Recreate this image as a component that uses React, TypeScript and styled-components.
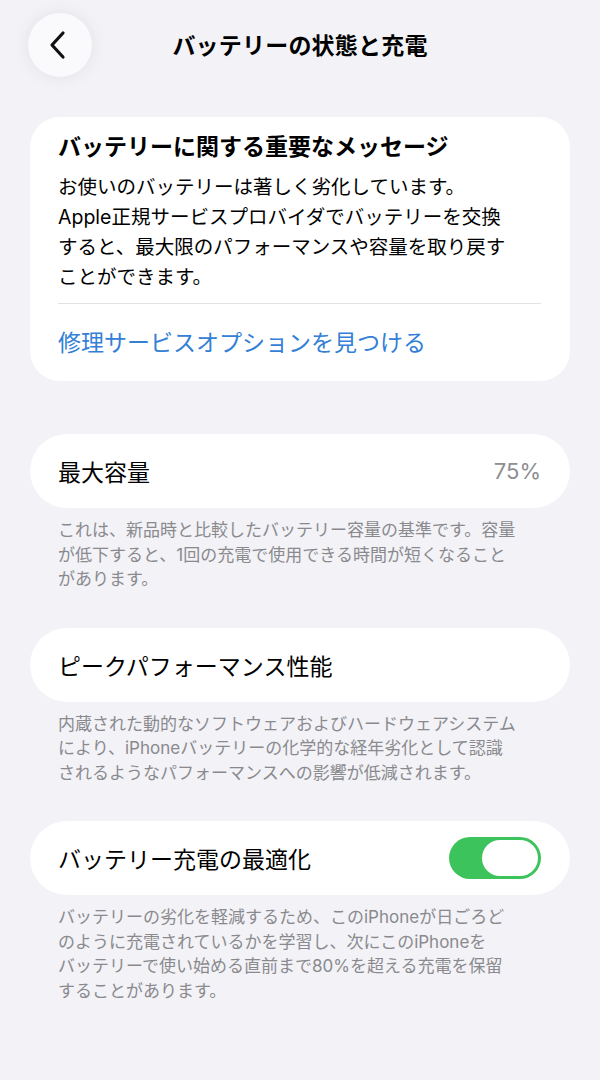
import styled, { createGlobalStyle } from 'styled-components';

const GlobalStyle = createGlobalStyle`
  body {
    margin: 0;
    background: #f2f2f7;
    font-family: Inter, "Noto Sans CJK JP", sans-serif;
    color: #000;
  }
`;

const StyledPage = styled.div`
  width: 600px;
  min-height: 1080px;
  padding: 0 30px 40px;
  box-sizing: border-box;
  background: #f2f2f7;
`;

const StyledHeader = styled.header`
  display: grid;
  grid-template-columns: 64px 1fr 64px;
  align-items: center;
  margin: 0 -2px;
  padding-top: 13px;
`;

const StyledBackButton = styled.button`
  width: 64px;
  height: 64px;
  border: none;
  border-radius: 50%;
  background: #fafafc;
  box-shadow: 0 0 18px rgba(0, 0, 0, 0.07);
  display: flex;
  align-items: center;
  justify-content: center;
  padding: 0 4px 0 0;
`;

const StyledTitle = styled.h1`
  margin: 0 0 2px;
  text-align: center;
  font-size: 23px;
  font-weight: 700;
  letter-spacing: 0.2px;
`;

const StyledCard = styled.section`
  background: #fff;
  border-radius: 30px;
  padding: 15px 29px 23px 28px;
  margin-top: 40px;
`;

const StyledCardTitle = styled.h2`
  margin: 0;
  font-size: 23px;
  line-height: 30px;
  font-weight: 700;
`;

const StyledCardBody = styled.p`
  margin: 10px 0 0;
  font-size: 19.5px;
  line-height: 30px;
`;

const StyledDivider = styled.hr`
  border: none;
  border-top: 1px solid #e2e2e6;
  margin: 11px 0 0;
`;

const StyledLink = styled.a`
  display: block;
  margin-top: 24px;
  font-size: 23px;
  line-height: 30px;
  color: #3380d6;
  text-decoration: none;
`;

interface StyledRowProps {
  $first?: boolean;
}
const StyledRow = styled.div<StyledRowProps>`
  background: #fff;
  border-radius: 38px;
  height: 74px;
  padding: 0 29px 0 28px;
  margin-top: ${({ $first }) => ($first ? '53px' : '36px')};
  display: flex;
  align-items: center;
  justify-content: space-between;
  font-size: 23px;
`;

const StyledValue = styled.span`
  color: #8e8e93;
  font-size: 22px;
`;

const StyledFooter = styled.p`
  margin: 10px 0 0;
  padding: 0 28px;
  font-size: 17px;
  line-height: 24.5px;
  color: #8a8a8e;
`;

interface StyledToggleProps {
  $on: boolean;
}
const StyledToggle = styled.span<StyledToggleProps>`
  width: 92px;
  height: 42px;
  border-radius: 21px;
  background: ${({ $on }) => ($on ? '#3dc35c' : '#e5e5ea')};
  display: flex;
  align-items: center;
  justify-content: ${({ $on }) => ($on ? 'flex-end' : 'flex-start')};
  padding: 0 3px;
  box-sizing: border-box;

  &::after {
    content: '';
    width: 56px;
    height: 36px;
    border-radius: 18px;
    background: #fff;
  }
`;

const App = () => {
  return (
    <>
      <GlobalStyle />
      <StyledPage>
        <StyledHeader>
          <StyledBackButton aria-label="戻る">
            <svg width="20" height="30" viewBox="0 0 20 30">
              <polyline
                points="15,3 4,15 15,27"
                fill="none"
                stroke="#111"
                strokeWidth="3.2"
                strokeLinecap="round"
                strokeLinejoin="round"
              />
            </svg>
          </StyledBackButton>
          <StyledTitle>バッテリーの状態と充電</StyledTitle>
          <span />
        </StyledHeader>

        <StyledCard>
          <StyledCardTitle>バッテリーに関する重要なメッセージ</StyledCardTitle>
          <StyledCardBody>
            お使いのバッテリーは著しく劣化しています。
            <br />
            Apple正規サービスプロバイダでバッテリーを交換
            <br />
            すると、最大限のパフォーマンスや容量を取り戻す
            <br />
            ことができます。
          </StyledCardBody>
          <StyledDivider />
          <StyledLink href="#">修理サービスオプションを見つける</StyledLink>
        </StyledCard>

        <StyledRow $first>
          <span>最大容量</span>
          <StyledValue>75%</StyledValue>
        </StyledRow>
        <StyledFooter>
          これは、新品時と比較したバッテリー容量の基準です。容量
          <br />
          が低下すると、1回の充電で使用できる時間が短くなること
          <br />
          があります。
        </StyledFooter>

        <StyledRow>
          <span>ピークパフォーマンス性能</span>
        </StyledRow>
        <StyledFooter>
          内蔵された動的なソフトウェアおよびハードウェアシステム
          <br />
          により、iPhoneバッテリーの化学的な経年劣化として認識
          <br />
          されるようなパフォーマンスへの影響が低減されます。
        </StyledFooter>

        <StyledRow>
          <span>バッテリー充電の最適化</span>
          <StyledToggle $on />
        </StyledRow>
        <StyledFooter>
          バッテリーの劣化を軽減するため、このiPhoneが日ごろど
          <br />
          のように充電されているかを学習し、次にこのiPhoneを
          <br />
          バッテリーで使い始める直前まで80%を超える充電を保留
          <br />
          することがあります。
        </StyledFooter>
      </StyledPage>
    </>
  );
};

export default App;
